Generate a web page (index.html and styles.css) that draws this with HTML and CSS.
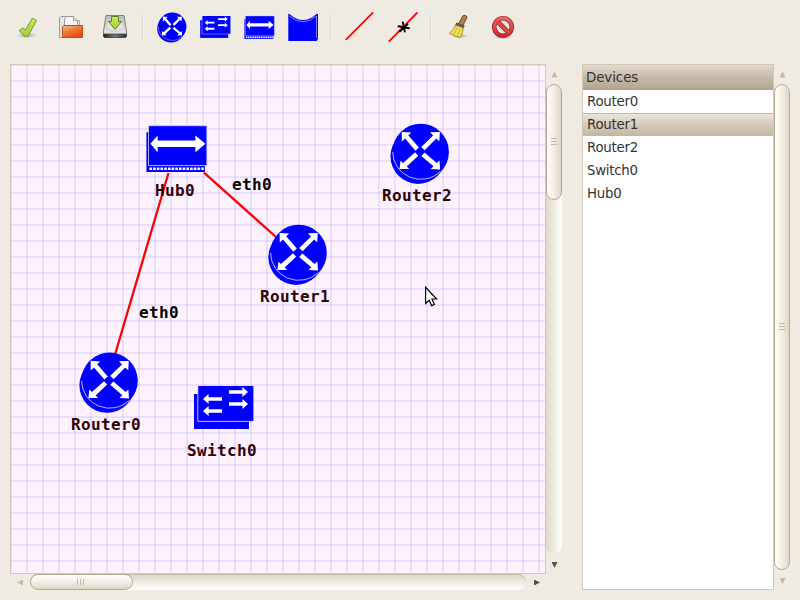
FILE: index.html
```html
<!DOCTYPE html>
<html lang="en">
<head>
<meta charset="utf-8">
<title>Network editor</title>
<link rel="stylesheet" href="styles.css">
</head>
<body>
<svg width="0" height="0" class="defs">
  <defs>
    <linearGradient id="green" x1="0" y1="0" x2="0" y2="1"><stop offset="0" stop-color="#d3e65c"/><stop offset="1" stop-color="#a9cc3c"/></linearGradient>
    <linearGradient id="orange" x1="0" y1="0" x2=".6" y2="1"><stop offset="0" stop-color="#f7c08a"/><stop offset=".5" stop-color="#ee7a38"/><stop offset="1" stop-color="#e8480f"/></linearGradient>
    <linearGradient id="metal" x1="0" y1="0" x2="0" y2="1"><stop offset="0" stop-color="#bdbdbd"/><stop offset="1" stop-color="#ededed"/></linearGradient>
    <linearGradient id="strip" x1="0" y1="0" x2="1" y2="0"><stop offset="0" stop-color="#222"/><stop offset=".5" stop-color="#777"/><stop offset="1" stop-color="#333"/></linearGradient>
    <linearGradient id="red" x1="0" y1="0" x2="0" y2="1"><stop offset="0" stop-color="#e2686a"/><stop offset="1" stop-color="#c9292d"/></linearGradient>
    <radialGradient id="shade"><stop offset="0" stop-color="#000" stop-opacity=".28"/><stop offset="1" stop-color="#000" stop-opacity="0"/></radialGradient>
    <g id="router">
      <circle cx="-2.6" cy="4.4" r="27.6" fill="#00f"/>
      <circle r="28.2" fill="#00f"/>
      <path d="M-28 0A28 27.400 0 0 0 19.800 19.400" fill="none" stroke="#c9c6ff" stroke-width=".9"/>
      <path fill="#fff" d="M-19-20L-9.400-19.400L-12.400-16.600L-1.800-4.400L-5.200-1.200L-15.600-13.400L-18.800-10.400Z
        M19.200-19.800L18.600-10.600L15.600-13.400L4-1.600L.6-5L12.400-16.400L9.400-19.600Z
        M-21.200 17.200L-20.200 8.800L-17.600 11.200L-5.600.4L-2.400 3.800L-14 14.600L-11.400 17.200Z
        M19.400 17.600L10 17.200L12.800 14.400L.6 4L3.800.6L16 11.200L18.800 8.600Z"/>
    </g>
    <g id="switch">
      <path fill="#00f" d="M-4 8H51V43H-4Z"/>
      <path fill="#00f" d="M0 0H55.400V35.200H0Z"/>
      <path fill="none" stroke="#d8d2ff" stroke-width=".9" d="M-.2 0V35.400H55"/>
      <path fill="#fff" d="M31 4.200h13.400V1L50 6l-5.600 5V7.800H31Z M31 16.200h13.400V13L50 18l-5.600 5v-3.200H31Z M24 11.200H10.600V8L5 13l5.600 5v-3.200H24Z M24 23.200H10.600V20L5 25l5.600 5v-3.200H24Z"/>
    </g>
    <g id="hub">
      <path fill="#00f" d="M-2 6.500H56.500V46.200H-2Z"/>
      <path fill="#00f" stroke="#d8d2ff" stroke-width=".8" d="M.1-.1H58.500V39.700H.1Z"/>
      <path fill="#fff" d="M2 18L9.300 9.600V14.800H47V9.600L57 18L47 26.400V21.200H9.300V26.400Z"/>
      <path d="M1 42.900H56" stroke="#fff" stroke-width="2.600" stroke-dasharray="2.600 1.100"/>
    </g>
  </defs>
</svg>
<div class="window">
  <header class="toolbar">
    <svg class="tool" viewBox="5 0 44 54">
      <ellipse cx="27" cy="35.500" rx="11" ry="3" fill="url(#shade)"/>
      <path d="M19.300 30.800L22.600 27.900L25.600 29.800L32.400 18.200L36.500 20.400L28 36.200H24.300Z" fill="url(#green)" stroke="#6c9a35" stroke-linejoin="round"/>
    </svg>
    <svg class="tool" viewBox="49 0 44 54">
      <path d="M59.500 37.500V18L61 16.500H69.500V37.500Z" fill="#e8e8e8" stroke="#999"/>
      <path d="M65.500 20.500H79.500V27H65.500Z" fill="#f0f0f0" stroke="#aaa"/>
      <path d="M64.500 27V19L67 16.500H73.500L77.500 20.500V27Z" fill="#f6f6f6" stroke="#999"/>
      <path d="M73.500 16.500V20.500H77.500" fill="#ddd" stroke="#999" stroke-width=".8"/>
      <path d="M62.500 37.500V26.500L63.500 25.500H82.500V37.500Z" fill="url(#orange)" stroke="#c9491a"/>
    </svg>
    <svg class="tool" viewBox="93 0 44 54">
      <path d="M106 15.500H124L126.500 31V36.500L125.500 37.500H104.500L103.500 36.500V31Z" fill="url(#metal)" stroke="#808080"/>
      <path d="M103.500 34H126.500V36.500L125.500 37.500H104.500L103.500 36.500Z" fill="url(#strip)" stroke="#444" stroke-width=".8"/>
      <ellipse cx="115" cy="25.500" rx="8.500" ry="6" fill="#e5e5e5" stroke="#bbb" stroke-width=".6"/>
      <path d="M111.500 16.500H118.500V21.500H121.500L115 29.500L108.500 21.500H111.500Z" fill="url(#green)" stroke="#4f8a23"/>
    </svg>
    <span class="separator"></span>
    <svg class="tool" viewBox="149 0 44 54"><use href="#router" transform="translate(172.300 26.600) scale(.5)"/></svg>
    <svg class="tool" viewBox="193 0 44 54"><use href="#switch" transform="translate(202.200 16) scale(.51)"/></svg>
    <svg class="tool" viewBox="237 0 44 54"><use href="#hub" transform="translate(245.400 16) scale(.495)"/></svg>
    <svg class="tool" viewBox="281 0 44 54">
      <path d="M288.300 41V14H289.500Q296 20 303 20Q310 20 316.500 14H318V38.500L316.800 41Z" fill="#00f"/>
      <path d="M289.500 16Q296 21.800 303 21.800Q310 21.800 316.500 16V38" fill="none" stroke="#b5b0ff" stroke-width=".7"/>
    </svg>
    <span class="separator"></span>
    <svg class="tool" viewBox="337 0 44 54"><path d="M346.300 39.300L372.600 12.900" stroke="#f00" stroke-width="1.800" stroke-linecap="round"/></svg>
    <svg class="tool" viewBox="381 0 44 54">
      <path d="M389.300 41.200L417 12.900" stroke="#f00" stroke-width="1.800" stroke-linecap="round"/>
      <path d="M398.500 26.300L409 28.200M402.800 22.500L404.800 31.600M400 31.300L407.500 24.200" stroke="#000" stroke-width="1.900" stroke-linecap="round"/>
    </svg>
    <span class="separator"></span>
    <svg class="tool" viewBox="437 0 44 54">
      <ellipse cx="460" cy="36" rx="9" ry="2.500" fill="url(#shade)"/>
      <path d="M461 24L464.500 17.600" stroke="#7a4a1c" stroke-width="5.400" stroke-linecap="round"/>
      <path d="M461 24L464.500 17.600" stroke="#bb8143" stroke-width="3.400" stroke-linecap="round"/>
      <path d="M455.800 24.500L463.300 27.500Q463 33 460.500 37.500L456 36.500L449.300 33.300Q454 30 455.800 24.500Z" fill="#efe05a" stroke="#a79222"/>
      <path d="M457.500 27L453.500 35M460.500 28L457.500 36" stroke="#b8a52d" stroke-width=".7"/>
      <path d="M455.800 23.800L464.200 26.600" stroke="#555a5c" stroke-width="3"/>
    </svg>
    <svg class="tool" viewBox="481 0 44 54">
      <ellipse cx="503" cy="37" rx="10" ry="2.500" fill="url(#shade)"/>
      <circle cx="503" cy="27" r="8.800" fill="#ece4de" stroke="#a92226" stroke-width="4.600"/>
      <path d="M497 21L509 33" stroke="#a92226" stroke-width="4.600"/>
      <circle cx="503" cy="27" r="8.800" fill="none" stroke="url(#red)" stroke-width="3.200"/>
      <path d="M497 21L509 33" stroke="#d6474a" stroke-width="3.200"/>
    </svg>
  </header>
  <main class="content">
    <section class="workspace">
      <div class="canvas">
        <svg class="diagram" viewBox="11 65 534 508">
          <g stroke="#f00" stroke-width="2.300">
            <path d="M168.500 173L115.500 353"/>
            <path d="M204 172.700L276 237"/>
          </g>
          <use href="#hub" x="148.400" y="125.800"/>
          <use href="#router" x="298.600" y="252.900"/>
          <use href="#router" x="420.700" y="151.900"/>
          <use href="#router" x="109.600" y="380.800"/>
          <use href="#switch" x="198" y="386"/>
          <g class="node-label">
            <text x="155" y="196">Hub0</text>
            <text x="260" y="302">Router1</text>
            <text x="382" y="201">Router2</text>
            <text x="71" y="430">Router0</text>
            <text x="187" y="456">Switch0</text>
          </g>
          <g class="port-label">
            <text x="232" y="190">eth0</text>
            <text x="139" y="318">eth0</text>
          </g>
          <path d="M425.600 287.300V303.500L429.200 300.200L431.600 305.600L434.400 304.400L432 299H436.600Z" fill="#fff" stroke="#000" stroke-width="1.200"/>
        </svg>
      </div>
      <div class="scroll vertical">
        <span class="arrow up off"></span>
        <div class="trough"><div class="thumb short"><i></i><i></i><i></i></div></div>
        <span class="arrow down"></span>
      </div>
      <div class="scroll horizontal">
        <span class="arrow left off"></span>
        <div class="trough"><div class="thumb"><i></i><i></i><i></i></div></div>
        <span class="arrow right"></span>
      </div>
    </section>
    <aside class="sidebar">
      <div class="devices">
        <div class="heading">Devices</div>
        <ul>
          <li>Router0</li>
          <li class="selected">Router1</li>
          <li>Router2</li>
          <li>Switch0</li>
          <li>Hub0</li>
        </ul>
      </div>
      <div class="scroll vertical">
        <span class="arrow up off"></span>
        <div class="trough"><div class="thumb"><i></i><i></i><i></i></div></div>
        <span class="arrow down off"></span>
      </div>
    </aside>
  </main>
</div>
</body>
</html>
```
FILE: styles.css
```css
* { box-sizing: border-box; }
body {
  margin: 0;
  background: #efebe3;
  color: #333;
  font: 13.33px "DejaVu Sans", sans-serif;
}
.defs { position: absolute; }
.window {
  width: 800px;
  height: 600px;
  display: flex;
  flex-direction: column;
  overflow: hidden;
}
.toolbar {
  height: 64px;
  padding-left: 5px;
  display: flex;
  align-items: flex-start;
}
.tool { width: 44px; height: 54px; flex: none; }
.separator {
  width: 2px;
  height: 26px;
  margin: 14px 5px 0;
  background: linear-gradient(90deg, #e0dacd 50%, #f4f1e9 50%);
}
.content {
  display: flex;
  padding-left: 10px;
  gap: 20px;
}
.workspace {
  display: grid;
  grid-template-columns: 536px 16px;
  grid-template-rows: 510px 16px;
}
.canvas {
  border: 1px solid #d3c8b5;
  background:
    repeating-linear-gradient(90deg, rgba(0,0,255,.08) 0 1px, transparent 1px 15px, rgba(0,0,255,.08) 15px 16px),
    repeating-linear-gradient(180deg, rgba(0,0,255,.08) 0 1px, transparent 1px 15px, rgba(0,0,255,.08) 15px 16px),
    #fff2ff;
}
.diagram { display: block; width: 534px; height: 508px; }
.node-label, .port-label {
  font: bold 16px "DejaVu Sans Mono", monospace;
  letter-spacing: .37px;
}
.node-label { fill: #300000; }
.port-label { fill: #000; }

.scroll { display: flex; align-items: center; }
.vertical { flex-direction: column; width: 16px; }
.vertical .arrow { flex: 0 0 20px; padding-left: 1px; }
.horizontal .arrow { flex: 0 0 20px; padding-top: 1px; }
.trough { flex: 1; display: flex; border-radius: 8px; }
.vertical .trough {
  width: 16px;
  background: linear-gradient(90deg, #dfd7c8, #fff);
}
.horizontal .trough {
  height: 16px;
  border-top: 1px solid #c8bca4;
  background: linear-gradient(#dfd8c9, #fff);
}
.horizontal { height: 16px; }
.thumb {
  display: flex;
  align-items: center;
  justify-content: center;
  gap: 2px;
  border: 1px solid #b9ab90;
  border-radius: 8px;
}
.vertical .thumb {
  width: 16px;
  height: 100%;
  flex-direction: column;
  padding-bottom: 2px;
  background: linear-gradient(90deg, #fffefb, #f3efe6 50%, #ddd4c4);
}
.vertical .thumb.short { height: 116px; }
.horizontal .thumb {
  width: 103px;
  height: 16px;
  margin-top: -1px;
  padding-right: 2px;
  background: linear-gradient(#fffefb, #f3efe6 50%, #ddd4c4);
}
.vertical .thumb { gap: 2px; }
.thumb i { background: #c4b9a4; }
.vertical i { width: 6px; height: 1px; }
.horizontal i { width: 1px; height: 6px; }

.arrow { display: flex; align-items: center; justify-content: center; color: #55534e; }
.arrow.off { color: #c4b9a2; }
.arrow::before { content: ""; width: 6px; height: 6px; background: currentColor; }
.up { padding-top: 1px; }
.down { padding-top: 2px; }
.right { padding-left: 2px; }
.up::before { clip-path: polygon(50% 0, 100% 100%, 0 100%); }
.down::before { clip-path: polygon(0 0, 100% 0, 50% 100%); }
.left::before { clip-path: polygon(100% 0, 100% 100%, 0 50%); }
.right::before { clip-path: polygon(0 0, 100% 50%, 0 100%); }

.sidebar { display: flex; height: 526px; }
.sidebar .thumb { height: auto; }
.devices {
  width: 192px;
  border: 1px solid #d3c8b5;
  background: #fff;
}
.heading {
  height: 25px;
  line-height: 26px;
  padding-left: 3px;
  letter-spacing: -.05px;
  border-bottom: 1px solid #ac9f8a;
  background: linear-gradient(#e2dacd, #c6bbab 50%, #b3a692);
}
ul { margin: 0; padding: 0; list-style: none; }
li {
  height: 23px;
  line-height: 24px;
  padding-left: 4px;
  letter-spacing: -.25px;
}
.selected {
  border-top: 1px solid #c5b79d;
  line-height: 21px;
  background: linear-gradient(#ebe5dc, #d4c9ba 50%, #c3b6a2);
}
```
